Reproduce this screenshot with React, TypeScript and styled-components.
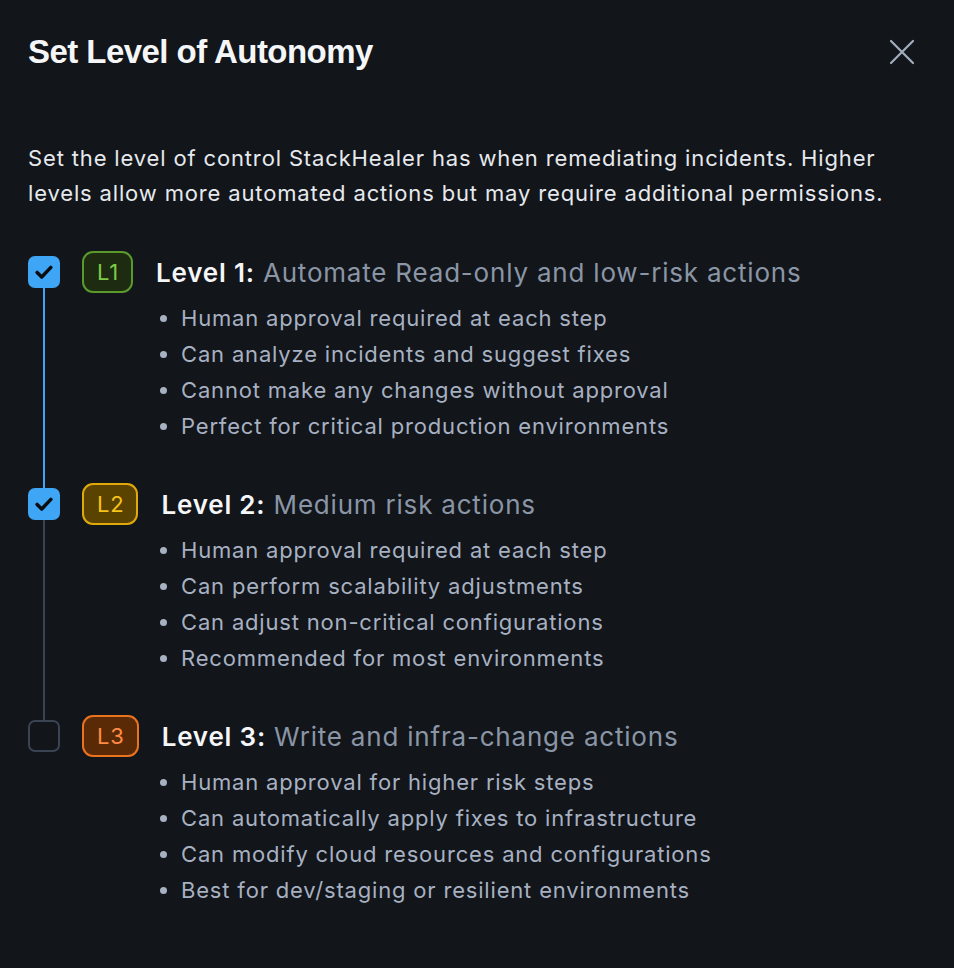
import React from "react";
import styled, { createGlobalStyle } from "styled-components";

const GlobalStyle = createGlobalStyle`
  html, body {
    margin: 0;
    padding: 0;
    background: #12151a;
  }
  * { box-sizing: border-box; }
`;

const Dialog = styled.div`
  width: 954px;
  min-height: 968px;
  background: #12151a;
  padding: 30px 28px 40px 28px;
  font-family: Inter, "Noto Sans", sans-serif;
  color: #e6e8ec;
`;

const Header = styled.div`
  display: flex;
  align-items: center;
  justify-content: space-between;
  height: 44px;
`;

const Title = styled.h1`
  margin: 0;
  font-family: "Liberation Sans", Arial, sans-serif;
  font-size: 33px;
  letter-spacing: -0.55px;
  font-weight: 700;
  color: #f5f6f8;
`;

const CloseButton = styled.button`
  background: none;
  border: none;
  padding: 0;
  margin-right: 10px;
  width: 28px;
  height: 28px;
  display: flex;
  align-items: center;
  justify-content: center;
  cursor: pointer;
`;

const Description = styled.p`
  margin: 67px 0 0 0;
  font-size: 22px;
  line-height: 35px;
  letter-spacing: 0.85px;
  color: #e6e9ed;
`;

const Levels = styled.div`
  display: flex;
  flex-direction: column;
  margin-top: 40px;
`;

const Item = styled.div<{ $last?: boolean }>`
  display: flex;
  gap: 22px;
  padding-bottom: ${(p) => (p.$last ? "0" : "39px")};
`;

const Rail = styled.div<{ $last?: boolean }>`
  display: flex;
  flex-direction: column;
  align-items: center;
  width: 32px;
  margin-bottom: ${(p) => (p.$last ? "0" : "-39px")};
`;

const Stub = styled.div<{ $color: string }>`
  width: 2px;
  height: 5px;
  background: ${(p) => p.$color};
`;

const Line = styled.div<{ $color: string }>`
  width: 2px;
  flex: 1;
  background: ${(p) => p.$color};
`;

const Check = styled.div<{ $checked: boolean }>`
  width: 32px;
  height: 32px;
  flex-shrink: 0;
  border-radius: 7px;
  display: flex;
  align-items: center;
  justify-content: center;
  background: ${(p) => (p.$checked ? "#3fa6f5" : "transparent")};
  border: ${(p) => (p.$checked ? "none" : "2px solid #3a4352")};
`;

const Body = styled.div`
  display: flex;
  flex-direction: column;
  flex: 1;
`;

const HeadRow = styled.div`
  display: flex;
  align-items: center;
  gap: 23px;
  height: 42px;
`;

const Badge = styled.span<{ $bg: string; $border: string; $fg: string }>`
  display: inline-flex;
  align-items: center;
  justify-content: center;
  height: 42px;
  padding: 0 12px 0 13px;
  border-radius: 11px;
  font-size: 22px;
  letter-spacing: 0.8px;
  background: ${(p) => p.$bg};
  border: 2px solid ${(p) => p.$border};
  color: ${(p) => p.$fg};
`;

const LevelTitle = styled.div`
  font-size: 26px;
  letter-spacing: 0.8px;
  color: #8a95a6;
  white-space: nowrap;
`;

const LevelName = styled.span`
  font-weight: 600;
  color: #f5f6f8;
`;

const Bullets = styled.ul`
  list-style: none;
  margin: 7px 0 0 78px;
  padding: 0;
`;

const Bullet = styled.li`
  display: flex;
  align-items: center;
  gap: 14px;
  height: 36px;
  font-size: 22px;
  letter-spacing: 0.82px;
  color: #a7b1c2;
  &::before {
    content: "";
    width: 7px;
    height: 7px;
    border-radius: 50%;
    background: #a7b1c2;
    flex-shrink: 0;
  }
`;

const BLUE = "#3fa6f5";
const GRAY = "#3a4352";

const levels = [
  {
    tag: "L1",
    name: "Level 1:",
    desc: "Automate Read-only and low-risk actions",
    checked: true,
    bg: "#1d2b10",
    border: "#5a9a2c",
    fg: "#7ecb48",
    points: [
      "Human approval required at each step",
      "Can analyze incidents and suggest fixes",
      "Cannot make any changes without approval",
      "Perfect for critical production environments",
    ],
  },
  {
    tag: "L2",
    name: "Level 2:",
    desc: "Medium risk actions",
    checked: true,
    bg: "#5a4300",
    border: "#e0a90a",
    fg: "#f6c21c",
    points: [
      "Human approval required at each step",
      "Can perform scalability adjustments",
      "Can adjust non-critical configurations",
      "Recommended for most environments",
    ],
  },
  {
    tag: "L3",
    name: "Level 3:",
    desc: "Write and infra-change actions",
    checked: false,
    bg: "#5a2a06",
    border: "#ea7320",
    fg: "#ff8c42",
    points: [
      "Human approval for higher risk steps",
      "Can automatically apply fixes to infrastructure",
      "Can modify cloud resources and configurations",
      "Best for dev/staging or resilient environments",
    ],
  },
];

const CheckMark = () => (
  <svg width="22" height="22" viewBox="0 0 24 24" fill="none">
    <path d="M4.5 12.5l5 5L19.5 7" stroke="#0b0d10" strokeWidth="3.8" strokeLinecap="round" strokeLinejoin="round" />
  </svg>
);

const App: React.FC = () => {
  return (
    <>
      <GlobalStyle />
      <Dialog>
        <Header>
          <Title>Set Level of Autonomy</Title>
          <CloseButton aria-label="Close">
            <svg width="26" height="26" viewBox="0 0 26 26" fill="none">
              <path d="M2 2l22 22M24 2L2 24" stroke="#a3aebf" strokeWidth="2.2" strokeLinecap="round" />
            </svg>
          </CloseButton>
        </Header>
        <Description>
          Set the level of control StackHealer has when remediating incidents. Higher levels allow more automated
          actions but may require additional permissions.
        </Description>
        <Levels>
          {levels.map((lv, i) => {
            const last = i === levels.length - 1;
            const topColor = i > 0 && lv.checked ? BLUE : GRAY;
            const nextColor = !last && levels[i + 1].checked ? BLUE : GRAY;
            return (
              <Item key={lv.tag} $last={last}>
                <Rail $last={last}>
                  <Stub $color={i === 0 ? "transparent" : topColor} />
                  <Check $checked={lv.checked}>{lv.checked && <CheckMark />}</Check>
                  {!last && <Line $color={nextColor} />}
                </Rail>
                <Body>
                  <HeadRow>
                    <Badge $bg={lv.bg} $border={lv.border} $fg={lv.fg}>
                      {lv.tag}
                    </Badge>
                    <LevelTitle>
                      <LevelName>{lv.name}</LevelName> {lv.desc}
                    </LevelTitle>
                  </HeadRow>
                  <Bullets>
                    {lv.points.map((p) => (
                      <Bullet key={p}>{p}</Bullet>
                    ))}
                  </Bullets>
                </Body>
              </Item>
            );
          })}
        </Levels>
      </Dialog>
    </>
  );
};

export default App;
